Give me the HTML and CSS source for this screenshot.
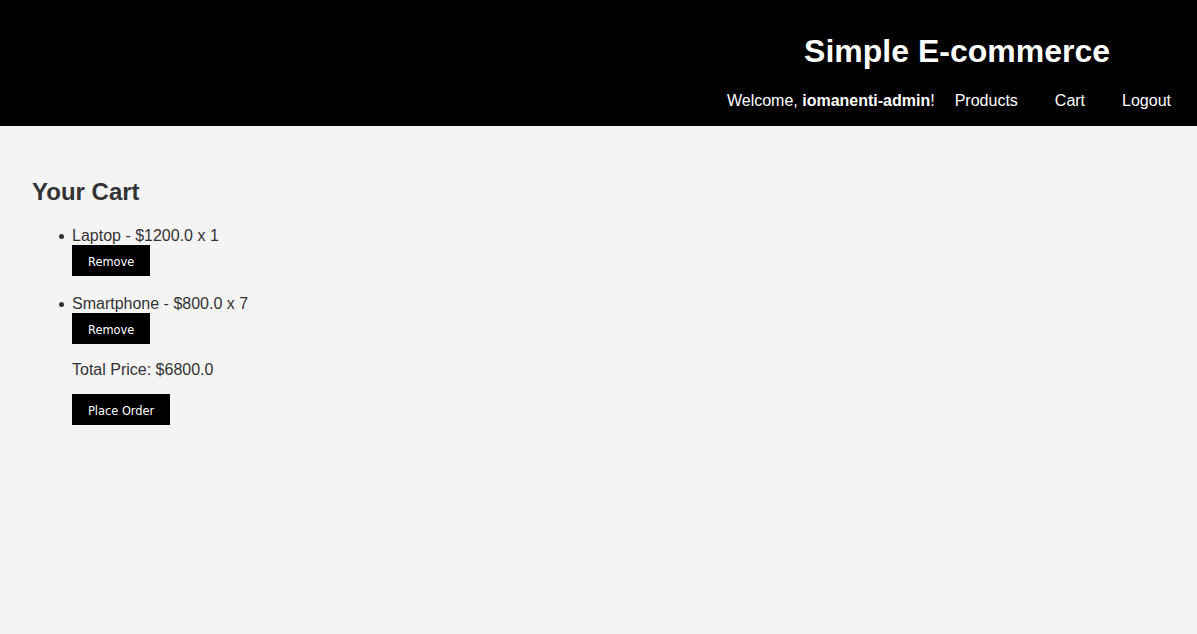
FILE: index.html
```html
<!DOCTYPE html>
<html>
<head>
<meta charset="utf-8">
<title>Simple E-commerce</title>
<link rel="stylesheet" href="styles.css">
</head>
<body>
<header class="site-header">
  <h1 class="site-title">Simple E-commerce</h1>
  <nav class="site-nav">
    <span class="welcome">Welcome, <strong>iomanenti-admin</strong>!</span>
    <a class="nav-link" href="#">Products</a>
    <a class="nav-link" href="#">Cart</a>
    <a class="nav-link" href="#">Logout</a>
  </nav>
</header>
<main class="content">
  <h2 class="page-title">Your Cart</h2>
  <ul class="cart-list">
    <li class="cart-item">
      <span class="item-text">Laptop - $1200.0 x 1</span>
      <button class="btn">Remove</button>
    </li>
    <li class="cart-item">
      <span class="item-text">Smartphone - $800.0 x 7</span>
      <button class="btn">Remove</button>
    </li>
  </ul>
  <div class="cart-summary">
    <p class="total">Total Price: $6800.0</p>
    <button class="btn">Place Order</button>
  </div>
</main>
</body>
</html>
```
FILE: styles.css
```css
html, body {
  margin: 0;
  padding: 0;
}
body {
  background: #f4f4f4;
  color: #333;
  font-family: "Liberation Sans", Arial, sans-serif;
  font-size: 16px;
  min-height: 634px;
}
.site-header {
  background: #000;
  color: #fff;
  padding: 33px 26px 16px;
  display: flex;
  flex-direction: column;
  align-items: flex-end;
}
.site-title {
  margin: 0 61px 22px 0;
  font-size: 32px;
  font-weight: bold;
  line-height: 37px;
}
.site-nav {
  display: flex;
  align-items: center;
  line-height: 18px;
}
.welcome {
  margin-right: 20px;
}
.nav-link {
  color: #fff;
  text-decoration: none;
  margin-left: 37px;
}
.welcome + .nav-link {
  margin-left: 0;
}
.content {
  padding: 32px 32px;
}
.page-title {
  margin: 20px 0 21px;
  font-size: 24px;
  line-height: 28px;
}
.cart-list {
  margin: 0;
  padding-left: 40px;
  list-style: none;
}
.cart-item {
  position: relative;
  margin-bottom: 19px;
  line-height: 18px;
}
.cart-item::before {
  content: "";
  position: absolute;
  left: -13px;
  top: 7px;
  width: 5px;
  height: 5px;
  border-radius: 50%;
  background: #333;
}
.item-text {
  display: block;
}
.cart-summary {
  padding-left: 40px;
}
.btn {
  display: block;
  box-sizing: border-box;
  height: 31px;
  background: #000;
  color: #fff;
  border: 0;
  border-radius: 0;
  font-family: "DejaVu Sans", Tahoma, sans-serif;
  font-size: 11.4px;
  line-height: 15px;
  padding: 10px 16px 6px;
  cursor: pointer;
}
.total {
  margin: -2px 0 15px;
  line-height: 18px;
}
```
